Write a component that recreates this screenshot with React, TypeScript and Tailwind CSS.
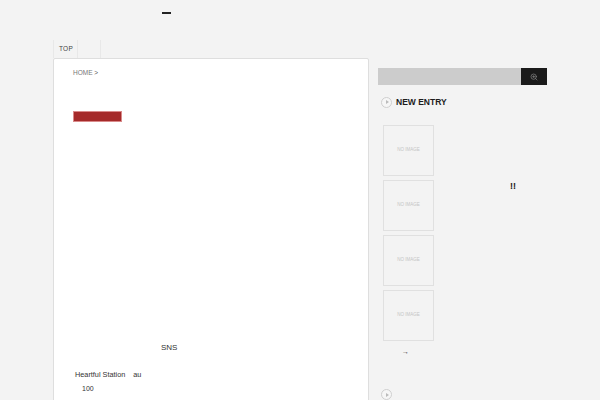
import { ZoomIn } from "lucide-react";

const font = "font-['Liberation_Sans',Arial,sans-serif]";

function CircleArrow() {
  return (
    <span className="flex h-[11px] w-[11px] shrink-0 items-center justify-center rounded-full border border-[#cfcfcf] bg-[#f6f6f6]">
      <span className="ml-px h-0 w-0 border-y-[2px] border-l-[3px] border-y-transparent border-l-[#bbbbbb]" />
    </span>
  );
}

function Thumb({ note }: { note?: string }) {
  return (
    <div className="flex h-[51px] items-start">
      <div className="flex h-[51px] w-[51px] shrink-0 items-center justify-center border border-[#e0e0e0] bg-[#f3f3f3] text-[4.5px] text-[#c4c4c4]">
        NO IMAGE
      </div>
      {note && (
        <span className="ml-[76px] mt-[1px] text-[9px] leading-[10px] font-bold text-[#222222]">{note}</span>
      )}
    </div>
  );
}

export default function App() {
  return (
    <div className={`${font} h-[400px] w-[600px] overflow-hidden bg-[#f3f3f3]`}>
      <header className="h-10 pl-[162px] pt-3">
        <div className="h-[2px] w-[9px] bg-[#222222]" />
      </header>

      <nav className="ml-[53px] flex h-[18px] items-center text-[6.5px] tracking-[0.3px] text-[#444444]">
        <span className="flex h-full w-[25px] items-center justify-center border-x border-[#e8e8e8] pl-px">TOP</span>
        <span className="h-full w-[23px] border-r border-[#e8e8e8]" />
      </nav>

      <div className="ml-[53px] flex items-start gap-[9px]">
        <main className="h-[400px] w-[316px] shrink-0 rounded-t-[2px] border border-[#dedede] bg-white pl-[19px] pt-[10px] text-[#333333]">
          <div className="text-[6.5px] leading-[8px] text-[#777777]">
            HOME <span className="text-[#555555]">&gt;</span>
          </div>
          <div className="mt-[34px] h-[11px] w-[49px] border border-[#d98a8a] bg-[#a52a2a]" />
          <p className="ml-[88px] mt-[221px] text-[8px] leading-[10px]">SNS</p>
          <p className="ml-[2px] mt-[17px] text-[7.3px] leading-[10px]">
            Heartful Station<span className="ml-[8px]">au</span>
          </p>
          <p className="ml-[9px] mt-[4px] text-[7px] leading-[10px]">100</p>
        </main>

        <aside className="w-[169px] shrink-0 pt-[10px]">
          <div className="flex h-[17px]">
            <div className="flex-1 bg-[#cccccc]" />
            <button className="flex w-[26px] items-center justify-center bg-[#1a1a1a]">
              <ZoomIn size={8} className="text-[#8a8a8a]" />
            </button>
          </div>

          <div className="ml-[3px] mt-[11px] flex h-[12px] items-center gap-[4px]">
            <CircleArrow />
            <h2 className="mt-px text-[8.5px] font-bold text-[#1c1c1c]">NEW ENTRY</h2>
          </div>

          <div className="ml-[5px] mt-[17px] flex flex-col gap-1">
            <Thumb />
            <Thumb note="!!" />
            <Thumb />
            <Thumb />
          </div>

          <div className="ml-[24px] mt-[6px] text-[7px] leading-[10px] text-[#333333]">→</div>

          <div className="ml-[3px] mt-[32px]">
            <CircleArrow />
          </div>
        </aside>
      </div>
    </div>
  );
}
